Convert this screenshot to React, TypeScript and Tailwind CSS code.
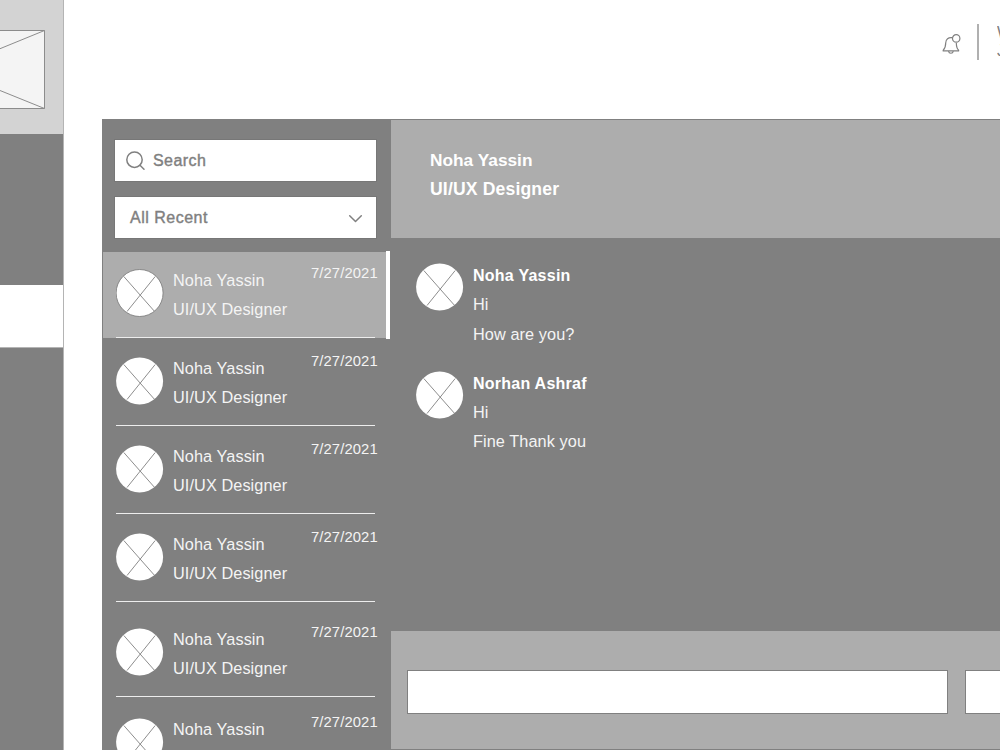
import React from 'react';
import clsx from 'clsx';

interface Contact {
  id: number;
  name: string;
  role: string;
  date: string;
  spacing: string;
  active?: boolean;
}

interface Message {
  id: number;
  author: string;
  lines: string[];
}

const contacts: Contact[] = [
  { id: 1, name: 'Noha Yassin', role: 'UI/UX Designer', date: '7/27/2021', spacing: '', active: true },
  { id: 2, name: 'Noha Yassin', role: 'UI/UX Designer', date: '7/27/2021', spacing: '' },
  { id: 3, name: 'Noha Yassin', role: 'UI/UX Designer', date: '7/27/2021', spacing: '' },
  { id: 4, name: 'Noha Yassin', role: 'UI/UX Designer', date: '7/27/2021', spacing: '' },
  { id: 5, name: 'Noha Yassin', role: 'UI/UX Designer', date: '7/27/2021', spacing: 'mt-[7px]' },
  { id: 6, name: 'Noha Yassin', role: 'UI/UX Designer', date: '7/27/2021', spacing: 'mt-0.5' },
];

const messages: Message[] = [
  { id: 1, author: 'Noha Yassin', lines: ['Hi', 'How are you?'] },
  { id: 2, author: 'Norhan Ashraf', lines: ['Hi', 'Fine Thank you'] },
];

const Avatar = ({ outlined = false }: { outlined?: boolean }) => (
  <svg className="h-12 w-12 shrink-0" viewBox="0 0 48 48" fill="none">
    <circle cx="23.6" cy="24" r="23.5" fill="#fff" stroke={outlined ? '#808080' : 'none'} strokeWidth="0.9" />
    <path d="M7.8 7.5 38.2 42M39.2 7.5 11 42.5" stroke="#808080" strokeWidth="0.9" />
  </svg>
);

const BellIcon = () => (
  <svg className="h-[21px] w-5 shrink-0" viewBox="0 0 20 21" fill="none" stroke="#808080" strokeWidth="1.2">
    <path d="M10.4 3.7C6.4 3 3.7 5.3 3.7 9c0 3.9-.6 5.4-2.5 7.1v.8h15.4v-.8c-1.600-1.500-2.200-3-2.300-7.200" strokeLinejoin="round" />
    <path d="M6.5 17.2c.5 2.7 4.300 2.700 4.800 0" />
    <circle cx="14.2" cy="4.4" r="3.7" />
  </svg>
);

const Sidebar = () => (
  <aside className="flex w-16 shrink-0 flex-col border-r border-[#b4b4b4] bg-[#808080]">
    <div className="h-[134px] shrink-0 bg-[#d3d3d3] pt-[30px]">
      <svg className="block h-[79px] w-[45px]" viewBox="0 0 45 79" fill="none" stroke="#8c8c8c">
        <path d="M-1 .5H44.5V78.5H-1Z" fill="#f4f4f4" />
        <path d="M0 18.7 44.5.5M0 60.5 44.5 78.5" />
      </svg>
    </div>
    <div className="mt-[151px] h-[63px] border-b border-[#b4b4b4] bg-white" />
  </aside>
);

const TopBar = () => (
  <header className="flex h-[119px] shrink-0 items-start justify-end">
    <div className="mt-[34px]">
      <BellIcon />
    </div>
    <div className="ml-[15px] mt-6 h-9 w-0.5 bg-[#b0b0b0]" />
    <div className="ml-[18px] mt-6 w-[3px] overflow-hidden text-base leading-[18px] text-[#808080]">
      <p>W</p>
      <p>J</p>
    </div>
  </header>
);

const ContactRow = ({ contact }: { contact: Contact }) => (
  <li
    className={clsx(
      'relative flex h-[88px] w-[284px] shrink-0 flex-col pl-[13px]',
      contact.spacing
    )}
  >
    {contact.active && (
      <>
        <span className="absolute left-0 top-0.5 h-[86px] w-[284px] bg-[#adadad]" />
        <span className="absolute left-[283px] top-px h-[88px] w-1 bg-white" />
      </>
    )}
    <div className="relative flex h-[87px] pt-[19px]">
      <Avatar outlined={contact.active} />
      <div className="ml-[9px] mt-[-3px] whitespace-nowrap text-[16.3px] leading-[29.3px] tracking-[0.08px]">
        <p>{contact.name}</p>
        <p>{contact.role}</p>
      </div>
      <time className="absolute left-[195px] top-[14px] text-[14.8px] leading-[18px] tracking-[0.1px]">{contact.date}</time>
    </div>
    <div className="relative h-px w-[258.5px] shrink-0 bg-[#ededed]" />
  </li>
);

const ContactsPanel = () => (
  <section className="-mb-px flex w-[289px] shrink-0 flex-col overflow-hidden bg-[#808080]">
    <div className="flex flex-col gap-3.5 pl-3 pt-[19px] text-[#808080]">
      <div className="flex h-[43px] w-[263px] items-center border border-[#777] bg-white pl-[11px]">
        <svg className="h-5 w-5" viewBox="0 0 20 20" fill="none" stroke="#808080" strokeWidth="1.5">
          <circle cx="8.5" cy="8.7" r="7.7" />
          <path d="m14 14.200 4 4" strokeLinecap="round" />
        </svg>
        <span className="ml-[7px] text-base tracking-[0.45px] [-webkit-text-stroke:0.4px_#808080]">Search</span>
      </div>
      <div className="flex h-[43px] w-[263px] items-center justify-between border border-[#777] bg-white pl-[15px] pr-3">
        <span className="text-base tracking-[0.5px] [-webkit-text-stroke:0.4px_#808080]">All Recent</span>
        <svg className="mt-0.5 h-4 w-4" viewBox="0 0 16 16" fill="none" stroke="#808080" strokeWidth="1.5">
          <path d="m1.7 4.7 5.8 5.8 5.8-5.8" strokeLinecap="round" strokeLinejoin="round" />
        </svg>
      </div>
    </div>
    <ul className="mt-[11px] flex flex-col pl-px text-[#f4f4f4]">
      {contacts.map((contact) => (
        <ContactRow key={contact.id} contact={contact} />
      ))}
    </ul>
  </section>
);

const Conversation = () => (
  <section className="flex min-w-0 grow flex-col bg-[#808080]">
    <div className="h-[118px] shrink-0 bg-[#adadad] pl-[39px] pt-[26px] font-bold leading-[29.3px] text-white">
      <p className="text-[17.3px]">Noha Yassin</p>
      <p className="text-[17.6px] tracking-[0.15px]">UI/UX Designer</p>
    </div>
    <div className="flex grow flex-col gap-[19.5px] pl-[25px] pt-[23px] text-[#f4f4f4]">
      {messages.map((message) => (
        <article key={message.id} className="flex h-[88px] pt-0.5">
          <Avatar />
          <div className="ml-[9px] mt-[-2px] text-[16.3px] leading-[29.3px] tracking-[0.08px]">
            <h3 className="text-base font-bold leading-[29.3px] tracking-[0.25px] text-white">{message.author}</h3>
            {message.lines.map((line) => (
              <p key={line}>{line}</p>
            ))}
          </div>
        </article>
      ))}
    </div>
    <div className="flex h-[118px] shrink-0 gap-[17px] bg-[#adadad] pl-4 pt-[39px]">
      <div className="h-11 w-[541px] shrink-0 border border-[#808080] bg-white" />
      <div className="h-11 grow border border-r-0 border-[#808080] bg-white" />
    </div>
  </section>
);

const App = () => {
  return (
    <div className="flex h-[750px] w-[1000px] overflow-hidden bg-white font-['Liberation_Sans',Arial,sans-serif]">
      <Sidebar />
      <div className="flex min-w-0 grow flex-col">
        <TopBar />
        <main className="ml-[38px] flex h-[631px] shrink-0 border-y border-[#808080]">
          <ContactsPanel />
          <Conversation />
        </main>
      </div>
    </div>
  );
};

export default App;
